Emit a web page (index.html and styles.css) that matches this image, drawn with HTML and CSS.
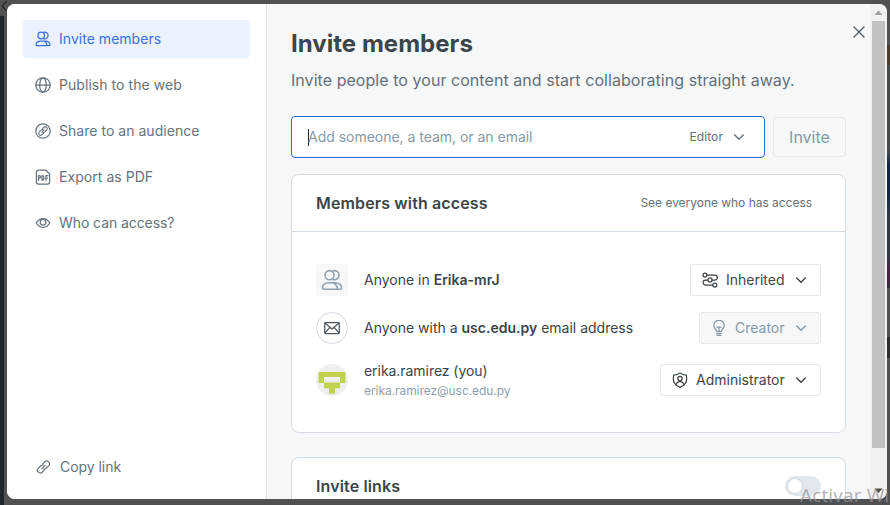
FILE: index.html
```html
<!DOCTYPE html>
<html lang="en">
<head>
<meta charset="utf-8">
<title>Invite members</title>
<link rel="stylesheet" href="styles.css">
</head>
<body>
<svg class="defs" aria-hidden="true">
  <symbol id="people" viewBox="0 0 16 16"><circle cx="6.200" cy="4.500" r="3.300"/><path d="M8.700 1.400a3.300 3.300 0 1 1 0 6.200M2 14.700c-.6 0-1-.4-1-.9C1 11.400 3 10 6 10h4c3 0 5 1.400 5 3.800 0 .5-.4.9-1 .9zM8.300 10c2.200.6 3.500 2.300 3.700 4.700"/></symbol>
  <symbol id="chevron" viewBox="0 0 12 12"><path d="M1.700 3.900 6 8.200l4.300-4.300"/></symbol>
  <symbol id="link" viewBox="0 0 16 16"><path d="M7.300 4.600 9.500 2.400a2.900 2.900 0 0 1 4.100 4.100L10.800 9.300a2.900 2.900 0 0 1-2.600.8M8.700 11.400l-2.200 2.200a2.900 2.900 0 0 1-4.100-4.100l2.800-2.800a2.900 2.900 0 0 1 2.600-.8M6.300 9.700l3.400-3.400"/></symbol>
</svg>
<div class="backcol"></div>
<div class="backright"></div>
<svg class="back" viewBox="0 0 8 12"><path d="M6.500 1.500 2 6l4.500 4.500"/></svg>
<div class="modal">
  <nav class="side">
    <a class="item active"><svg class="ico"><use href="#people"/></svg><span>Invite members</span></a>
    <a class="item web"><svg class="ico" viewBox="0 0 16 16"><circle cx="8" cy="8" r="7.200"/><ellipse cx="8" cy="8" rx="3.300" ry="7.200"/><path d="M.8 8h14.400"/></svg><span>Publish to the web</span></a>
    <a class="item"><svg class="ico" viewBox="0 0 16 16"><circle cx="8" cy="8" r="7.200"/><use href="#link" x="2.700" y="2.700" width="10.600" height="10.600" class="thick"/></svg><span>Share to an audience</span></a>
    <a class="item pdf"><svg class="ico" viewBox="0 0 16 16"><path d="M1.400 5V3a2 2 0 0 1 2-2h7.200l4 4v8a2 2 0 0 1-2 2H3.400a2 2 0 0 1-2-2V5"/><path d="M3.500 11.500V6.600h.6a1.400 1.400 0 0 1 0 2.800h-.6M7 6.600v4.600h.3c2.200 0 2.200-4.600 0-4.600zM11 11.500V6.600h2M11 9h1.600"/></svg><span>Export as PDF</span></a>
    <a class="item access-q"><svg class="ico" viewBox="0 0 16 16"><path d="M1.200 8C3 5 5.300 3.700 8 3.700S13 5 14.800 8C13 11 10.700 12.300 8 12.300S3 11 1.200 8z"/><circle cx="8" cy="7.200" r="2.800"/></svg><span>Who can access?</span></a>
    <a class="item copy"><svg class="ico"><use href="#link"/></svg><span>Copy link</span></a>
  </nav>
  <main class="main">
    <h1>Invite members</h1>
    <p class="lead">Invite people to your content and start collaborating straight away.</p>
    <div class="invite">
      <div class="field"><i class="caret"></i><span class="ph">Add someone, a team, or an email</span><span class="role">Editor</span><svg class="chev"><use href="#chevron"/></svg></div>
      <button class="send">Invite</button>
    </div>
    <section class="card">
      <header><h2 class="access">Members with access</h2><a class="see">See everyone who has access</a></header>
      <div class="rows">
        <div class="row">
          <span class="av square"><svg class="big"><use href="#people"/></svg></span>
          <span class="who">Anyone in <b>Erika-mrJ</b></span>
          <span class="drop inherited"><svg class="ico" viewBox="0 0 16 16"><circle cx="3" cy="3" r="2"/><circle cx="8" cy="8" r="2.100"/><circle cx="12.800" cy="13" r="2"/><path d="M5 3h7.800a2.500 2.500 0 0 1 0 5h-2.700M5.900 8H3.600a2.500 2.500 0 0 0 0 5h7.200"/></svg><span>Inherited</span><svg class="chev"><use href="#chevron"/></svg></span>
        </div>
        <div class="row">
          <span class="av round"><svg class="ico" viewBox="0 0 16 16"><rect x=".7" y="2.500" width="14.600" height="11" rx="1"/><path d="m1 3 7 6 7-6M1 13l4.800-5.600M15 13l-4.800-5.600"/></svg></span>
          <span class="who">Anyone with a <b>usc.edu.py</b> email address</span>
          <span class="drop creator"><svg class="ico" viewBox="0 0 16 16"><path d="M5.800 11.500c0-2-3-2.800-3-6a5.200 5.200 0 0 1 10.400 0c0 3.200-3 4-3 6zM5.800 13.500h4.400M6 15.300h4M8 11.500V7.500M6 7.200h4"/></svg><span>Creator</span><svg class="chev"><use href="#chevron"/></svg></span>
        </div>
        <div class="row user">
          <svg class="av" viewBox="0 0 32 32"><circle class="disc" cx="16" cy="16" r="16"/><path class="block" d="M2.500 8h27v11H24v5.300h-5v5.400h-6v-5.400H8V19H2.500zM8 13v5.500h16V13z"/></svg>
          <span class="who">erika.ramirez (you)<small>erika.ramirez@usc.edu.py</small></span>
          <span class="drop admin"><svg class="ico" viewBox="0 0 16 16"><path d="M8 .9C6.200 2.500 4 3 1.600 3L1.300 7c0 4 2.500 6.700 6.700 8.300 4.200-1.600 6.700-4.300 6.700-8.300l-.3-4C12 3 9.800 2.500 8 .9z"/><circle cx="8" cy="6.500" r="2.200"/><path d="M4.300 13c0-4.500 7.400-4.500 7.400 0"/></svg><span>Administrator</span><svg class="chev"><use href="#chevron"/></svg></span>
        </div>
      </div>
    </section>
    <section class="card links"><h2 class="lk">Invite links</h2><span class="toggle"><i></i></span></section>
  </main>
  <div class="bar"><svg viewBox="0 0 17 17"><path d="M4.500 11h8l-4-4.500z"/></svg><div class="thumb"></div><svg class="down" viewBox="0 0 17 17"><path d="M4.500 6.500h8l-4 4.500z"/></svg></div>
  <svg class="close" viewBox="0 0 12 12"><path d="m1 1 10 10M11 1 1 11"/></svg>
</div>
<div class="mark">Activar Wi</div>
</body>
</html>
```
FILE: styles.css
```css
* { box-sizing: border-box; }
html, body { margin: 0; height: 100%; overflow: hidden; }
body { padding: 4px 3px 6px 7px; background: #505153; font-family: Inter, sans-serif; font-size: 14px; color: #3c4549; }
svg { fill: none; stroke: currentColor; stroke-width: 1.25; stroke-linejoin: round; stroke-linecap: round; flex: none; }
.defs { position: absolute; width: 0; height: 0; }
.backcol { position: absolute; left: 0; top: 16px; width: 4px; height: 489px; background: #20252e; }
.backright { position: absolute; right: 0; top: 45px; width: 3px; height: 315px; background: linear-gradient(#4b3c30 0 20px, #454a4d 20px 105px, #14274a 120px 150px, #303a45 170px 210px, #4a2447 225px 235px, #303238 243px, #505153 243px 292px, #2b2d31 292px 313px, #505153 313px); }
.back { position: absolute; left: 0; top: 0; width: 8px; height: 12px; color: #24272b; }
.modal { position: relative; height: 495px; display: flex; background: #f5f7f9; border-radius: 8px; overflow: hidden; }
.side { width: 260px; padding: 16px; background: #fff; border-right: 1px solid #dce3e9; display: flex; flex-direction: column; gap: 8px; color: #65737e; }
.item { display: flex; align-items: center; gap: 8px; height: 38px; padding: 0 12px; border-radius: 4px; width: 227px; letter-spacing: .03px; white-space: nowrap; }
.item.active { background: #ebf2ff; color: #3b72dc; }
.item > span, .drop > span, .ph { padding-bottom: 1px; }
.web { letter-spacing: .05px; }
.pdf { letter-spacing: .05px; }
.access-q { letter-spacing: -.08px; }
.copy { margin-top: auto; margin-bottom: -3px; padding-left: 13px; letter-spacing: -.05px; }
.copy .ico { width: 15px; }
.copy > span { margin-left: 1px; }
.ico { width: 16px; height: 16px; }
.thick { stroke-width: 1.600; }
.main { width: 603px; padding: 24px 24px 0; overflow: hidden; }
h1 { margin: 0; font-size: 24px; line-height: 32px; font-weight: 700; letter-spacing: .03px; }
h2 { margin: 0; font-size: 16px; line-height: 24px; font-weight: 600; white-space: nowrap; letter-spacing: .13px; }
.lead { margin: 8px 0 0; font-size: 16px; line-height: 24px; color: #65707a; letter-spacing: .05px; white-space: nowrap; }
.invite { display: flex; align-items: center; gap: 8px; margin-top: 24px; }
.field { width: 474px; height: 42px; border: 1px solid #3267d6; border-radius: 4px; background: #fff; display: flex; align-items: center; padding: 0 19px 0 16px; }
.caret { width: 1px; height: 17px; background: #222b30; }
.ph { color: #8799a5; flex: 1; margin-left: -1px; letter-spacing: -.02px; }
.role { font-size: 12px; color: #65707a; margin-right: 10px; letter-spacing: .1px; padding-bottom: 1px; }
.chev { width: 12px; height: 12px; stroke-width: 1.400; }
.role + .chev { color: #65707a; }
.send { width: 73px; height: 40px; padding: 0; border: 1px solid #e4e8ec; border-radius: 4px; background: #f5f7f9; font: 16px Inter, sans-serif; color: #8799a5; }
.card { width: 555px; height: 259px; margin-top: 16px; background: #fff; border: 1px solid #d3dce4; border-radius: 8px; }
.card header { height: 57px; padding: 0 33px 0 24px; display: flex; align-items: center; justify-content: space-between; border-bottom: 1px solid #d3dce4; }
.see { font-size: 12px; color: #65707a; letter-spacing: -.03px; padding-bottom: 1px; }
.rows { padding: 32px 24px; display: flex; flex-direction: column; gap: 16px; }
.row { display: flex; align-items: center; height: 32px; }
.row.user { margin-top: 4px; }
.av { width: 32px; height: 32px; display: flex; align-items: center; justify-content: center; flex: none; }
.square { background: #f5f7f9; border-radius: 3px; color: #90a1af; }
.round { border: 1px solid #d3dce4; border-radius: 50%; color: #4d5860; }
.big { width: 22px; height: 22px; stroke-width: 1.150; }
.disc { fill: #efefef; stroke: none; }
.block { fill: #c3d150; stroke: none; fill-rule: evenodd; }
.who { margin-left: 16px; flex: 1; white-space: nowrap; padding-bottom: 1px; }
.user .who { padding-bottom: 1px; letter-spacing: -.05px; }
.who b { font-weight: 600; }
.who small { display: block; margin-top: 4px; font-size: 12px; line-height: 15px; color: #8fa0ae; letter-spacing: -.06px; }
.drop { height: 32px; display: flex; align-items: center; gap: 8px; border: 1px solid #e1e7ec; border-radius: 3px; padding: 0 13px 0 11px; }
.drop > span { flex: 1; }
.inherited { width: 131px; }
.creator { width: 122px; background: #f5f7f9; color: #8799a5; }
.admin { width: 161px; }
.links { margin-top: 24px; height: 90px; padding: 16px 24px; display: flex; justify-content: space-between; }
.toggle { width: 36px; height: 20px; margin-top: 2px; padding: 2px; border-radius: 10px; background: #e1e7ec; }
.toggle i { display: block; width: 16px; height: 16px; border-radius: 50%; background: #fff; border: 1px solid #d0dae2; }
.bar { width: 17px; background: #f1f1f1; display: flex; flex-direction: column; align-items: center; }
.bar svg { width: 17px; height: 17px; fill: #a3a3a3; stroke: none; }
.thumb { width: 13px; height: 427px; background: #c1c1c1; }
.bar .down { margin-top: auto; fill: #505050; }
.close { position: absolute; left: 846px; top: 22px; width: 12px; height: 12px; color: #505d6b; stroke-width: 1.250; }
.mark { position: absolute; left: 800px; top: 484px; width: 90px; overflow: hidden; white-space: nowrap; font: 19px/22px "Open Sans", sans-serif; letter-spacing: .15px; color: rgba(150,150,150,.75); }
```
